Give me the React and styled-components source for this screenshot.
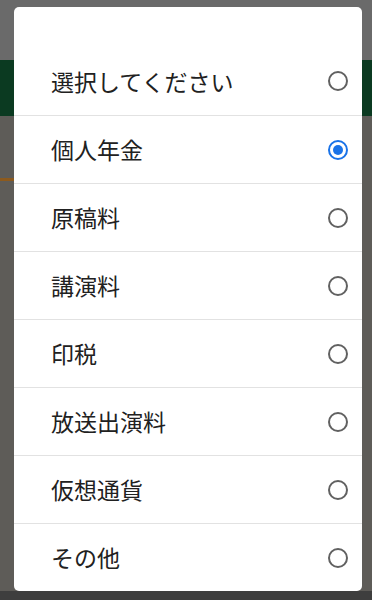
import React, { useState } from "react";
import styled, { createGlobalStyle } from "styled-components";

const Global = createGlobalStyle`
  html, body { margin: 0; padding: 0; }
  body {
    width: 372px;
    height: 600px;
    overflow: hidden;
    font-family: "Noto Sans CJK JP", "Noto Sans", sans-serif;
  }
`;

const Page = styled.div`
  position: relative;
  width: 372px;
  height: 600px;
  display: flex;
  flex-direction: column;
  background: #5e5c58;
`;

const TopBar = styled.div`
  height: 60px;
  background: #6a6a6a;
`;

const GreenBand = styled.div`
  height: 56px;
  background: #0b3a21;
`;

const Content = styled.div`
  flex: 1;
  display: flex;
  flex-direction: column;
  padding-top: 62px;
`;

const AccentLine = styled.div`
  height: 3px;
  width: 40px;
  background: #8c5a1e;
`;

const Spacer = styled.div`
  flex: 1;
`;

const BottomStrip = styled.div`
  height: 9px;
  background: #3e3e3e;
`;

const Dialog = styled.div`
  position: absolute;
  left: 14px;
  top: 7px;
  width: 348px;
  background: #ffffff;
  border-radius: 5px;
  padding-top: 40px;
  display: flex;
  flex-direction: column;
  overflow: hidden;
`;

const Option = styled.label`
  display: flex;
  align-items: center;
  justify-content: space-between;
  height: 68px;
  padding: 0 14px 0 37px;
  box-sizing: border-box;
  border-top: ${(p) => (p.$first ? "none" : "1px solid #e2e2e2")};
  cursor: pointer;
`;

const Label = styled.span`
  font-size: 23px;
  color: #212121;
  letter-spacing: 0;
  line-height: 1;
`;

const Radio = styled.span`
  width: 20px;
  height: 20px;
  box-sizing: border-box;
  border-radius: 50%;
  border: 2px solid ${(p) => (p.$checked ? "#1a73e8" : "#616161")};
  display: flex;
  align-items: center;
  justify-content: center;
  margin-top: ${(p) => (p.$first ? "0" : "1px")};
  &::after {
    content: "";
    width: 10px;
    height: 10px;
    border-radius: 50%;
    background: ${(p) => (p.$checked ? "#1a73e8" : "transparent")};
  }
`;

const options = [
  "選択してください",
  "個人年金",
  "原稿料",
  "講演料",
  "印税",
  "放送出演料",
  "仮想通貨",
  "その他",
];

export default function App() {
  const [selected, setSelected] = useState(1);
  return (
    <>
      <Global />
      <Page>
        <TopBar />
        <GreenBand />
        <Content>
          <AccentLine />
          <Spacer />
          <BottomStrip />
        </Content>
        <Dialog role="radiogroup">
          {options.map((o, i) => (
            <Option key={o} $first={i === 0} onClick={() => setSelected(i)}>
              <Label>{o}</Label>
              <Radio $checked={selected === i} $first={i === 0} />
            </Option>
          ))}
        </Dialog>
      </Page>
    </>
  );
}
